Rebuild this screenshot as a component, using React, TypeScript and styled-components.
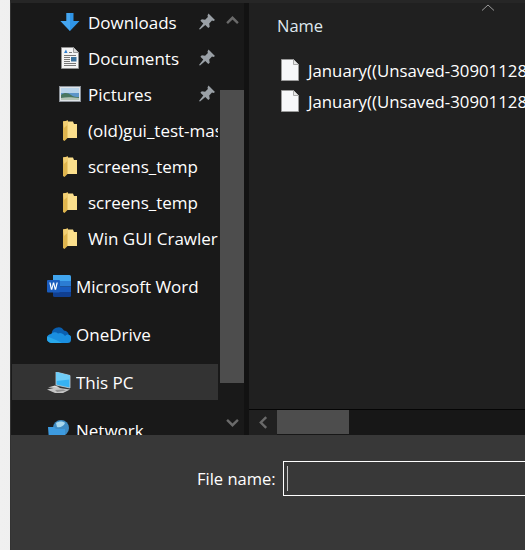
import styled, { createGlobalStyle } from "styled-components";

const GlobalStyle = createGlobalStyle`
  html, body { margin: 0; padding: 0; background: #e2e2e2; }
  * { box-sizing: border-box; }
`;

const FONT = `"Open Sans", "Noto Sans", sans-serif`;

function DownloadIcon() {
  return (
    <svg width="20" height="20" viewBox="0 0 20 20">
      <path d="M6.500 1h7v8H19.500L10 19 .5 9h6z" fill="#2f94e6" />
      <path d="M10 19 .5 9h6V1H10z" fill="#45a5ef" />
    </svg>
  );
}

function DocumentIcon() {
  return (
    <svg width="18" height="22" viewBox="0 0 18 22">
      <path d="M.5.5h12l5 5v16H.5z" fill="#f4f4f4" stroke="#8f8f8f" />
      <path d="M12.500.5v5h5" fill="#d8d8d8" stroke="#9a9a9a" />
      <path d="M3 6 5 2.500 6.500 6z" fill="#2f7fd0" />
      <path d="M8 5.500h3M3 8.500h12M3 10.500h6M3 12.500h6M3 14.500h6M3 16.500h12M3 18.500h12" stroke="#777" />
      <rect x="10" y="10" width="5.500" height="4.500" fill="#39719c" />
    </svg>
  );
}

function PictureIcon() {
  return (
    <svg width="22" height="16" viewBox="0 0 22 16">
      <rect x=".5" y=".5" width="21" height="15" fill="#dfe4e8" stroke="#8c9299" />
      <rect x="2" y="2" width="18" height="12" fill="#5c95c9" />
      <path d="M2 2h18v5H2z" fill="#b8d4ea" />
      <path d="M2 9c4-3 7-2 10 0s5 2 8 2v3H2z" fill="#48765f" />
      <path d="M2 12c5-1 10-1 18 0v2H2z" fill="#b2c3b5" />
    </svg>
  );
}

function FolderIcon() {
  return (
    <svg width="15" height="21" viewBox="0 0 15 21">
      <path d="M0 1.500 5 .5v17L1.500 21 0 20z" fill="#dfb54e" />
      <path d="M4.500 1.500h5.500l1 2.500H14v14H4.500z" fill="#fbdf8c" />
      <path d="M0 1.500 5 .5v4L1 8z" fill="#f2cf73" />
    </svg>
  );
}

function WordIcon() {
  return (
    <svg width="24" height="22" viewBox="0 0 24 22">
      <path d="M6 0h16.500A1.500 1.500 0 0 1 24 1.500V6H6z" fill="#41a5ee" />
      <rect x="6" y="6" width="18" height="5.500" fill="#2b7cd3" />
      <rect x="6" y="11.500" width="18" height="5.500" fill="#185abd" />
      <path d="M6 17h18v3.500a1.500 1.500 0 0 1-1.500 1.500H7.500A1.500 1.500 0 0 1 6 20.500z" fill="#103f91" />
      <rect x="0" y="5" width="13" height="12.500" rx="1" fill="#1a5cbe" />
      <path d="M2.300 7.500h1.300l1.100 5.300 1.200-5.300h1.300l1.200 5.300 1.100-5.300h1.300l-1.700 7.300H7.700L6.500 9.500l-1.200 5.300H3.900z" fill="#fff" />
    </svg>
  );
}

function CloudIcon() {
  return (
    <svg width="24" height="17" viewBox="0 0 24 17">
      <path d="M5 9a6.500 6.500 0 0 1 12-4.500A5.500 5.500 0 0 1 22 10L12 15z" fill="#0a5fb0" />
      <path d="M4.500 17A4.500 4.500 0 0 1 4 8a5 5 0 0 1 7-.500 5.500 5.500 0 0 1 7 2.500 3.500 3.500 0 0 1 6 3.500A3.500 3.500 0 0 1 20.500 17z" fill="#1a8fe0" />
      <path d="M4.500 17A4.500 4.500 0 0 1 .5 10.500L9 14l6 3z" fill="#28a8ea" />
    </svg>
  );
}

function ComputerIcon() {
  return (
    <svg width="24" height="21" viewBox="0 0 24 21">
      <path d="M9 0l14 3.500v12.500L9 13z" fill="#36b2f2" stroke="#c9d3da" strokeWidth=".8" />
      <path d="M9 0l14 3.500v4L9 9z" fill="#6fcdf8" />
      <path d="M1 15.500 8 13.500l5 2-3 .5z" fill="#dcdcdc" />
      <path d="M0 17.500 9 15.500l14 2-7 3.500H8z" fill="#c4c4c4" />
      <path d="M8 18l8-.5 3 1-9 1.500z" fill="#8f8f8f" />
    </svg>
  );
}

function GlobeIcon() {
  return (
    <svg width="22" height="20" viewBox="0 0 22 20">
      <circle cx="13" cy="8" r="8" fill="#3f8cc4" />
      <path d="M8 3c3-2 7-2 9 0-1 3-5 5-8 4z" fill="#a9d8ee" />
      <path d="M0 7h6l2 2h9v11H1z" fill="#3d9be0" />
    </svg>
  );
}

function PinIcon() {
  return (
    <svg width="16" height="17" viewBox="0 0 16 16">
      <path d="M9.500 0 16 6.500l-1.500 1-1.500-.4-2.800 2.800.5 3.300-1.400 1.400-3-3L1 16l-1-.6 4.300-5.300L1.400 7.200 2.800 5.800l3.300.5L8.900 3.500l-.4-1.500z" fill="#9aa0a6" />
    </svg>
  );
}

function Chevron({ dir, size = 13 }: { dir: "up" | "down" | "left"; size?: number }) {
  const d =
    dir === "up"
      ? "M1 8.500 6 3.500l5 5"
      : dir === "down"
        ? "M1 3.500l5 5 5-5"
        : "M8.500 1 3.500 6l5 5";
  return (
    <svg width={size} height={size} viewBox="0 0 12 12">
      <path d={d} fill="none" stroke="#6a6a6a" strokeWidth="2.200" />
    </svg>
  );
}

function FileIcon() {
  return (
    <svg width="18" height="22" viewBox="0 0 18 22" style={{ flex: "none" }}>
      <path d="M.5.500h12l5 5v16H.5z" fill="#f7f8fa" stroke="#9a9a9a" />
      <path d="M12.500.5v5h5" fill="#e6e6e6" stroke="#a8a8a8" />
    </svg>
  );
}

const Page = styled.div`
  width: 525px;
  height: 550px;
  display: flex;
  overflow: hidden;
  font-family: ${FONT};
  background: linear-gradient(to right, #f0f0f0, #d6d6d6);
`;

const Dialog = styled.div`
  margin-left: 10px;
  width: 515px;
  flex: none;
  display: flex;
  flex-direction: column;
  background: #2b2b2b;
  border-left: 1px solid #333;
  border-top: 3px solid #262626;
`;

const Browser = styled.div`
  height: 432px;
  flex: none;
  display: flex;
  background: #111;
`;

const NavPane = styled.nav`
  width: 233px;
  flex: none;
  display: flex;
  background: #191919;
  overflow: hidden;
`;

const NavList = styled.div`
  width: 209px;
  flex: none;
  padding: 1px 0 0 1px;
  overflow: hidden;
`;

const NavGroup = styled.div`
  margin-bottom: 12px;
`;

const NavRow = styled.div<{ $selected?: boolean; $indent?: boolean }>`
  position: relative;
  height: 36px;
  width: 206px;
  display: flex;
  align-items: center;
  background: ${(p) => (p.$selected ? "#333333" : "transparent")};
  padding-left: ${(p) => (p.$indent ? "47px" : "35px")};
`;

const NavIcon = styled.span<{ $wide?: boolean }>`
  width: 28px;
  flex: none;
  display: flex;
  justify-content: center;
  margin-left: ${(p) => (p.$wide ? "-2px" : "-3px")};
  margin-right: ${(p) => (p.$wide ? "3px" : "4px")};
`;

const NavLabel = styled.span`
  color: #fff;
  font-size: 17px;
  white-space: nowrap;
  overflow: hidden;
  flex: 1;
`;

const Pin = styled.span`
  position: absolute;
  left: 187px;
  top: 9px;
  display: flex;
`;

const VScroll = styled.div`
  width: 24px;
  flex: none;
  display: flex;
  flex-direction: column;
`;

const ScrollBtn = styled.div`
  height: 35px;
  flex: none;
  display: flex;
  align-items: center;
  justify-content: center;
`;

const VThumb = styled.div`
  height: 293px;
  flex: none;
  margin-top: 52px;
  background: #4d4d4d;
`;

const VBottom = styled.div`
  flex: 1;
  display: flex;
  align-items: flex-end;
  justify-content: center;
  padding-bottom: 6px;
`;

const Splitter = styled.div`
  width: 5px;
  flex: none;
  background: #121212;
`;

const Content = styled.main`
  flex: 1;
  min-width: 0;
  display: flex;
  flex-direction: column;
  background: #202020;
`;

const Header = styled.div`
  position: relative;
  height: 44px;
  flex: none;
  display: flex;
  align-items: center;
  padding-left: 28px;
  color: #dfe8ee;
  font-size: 16.500px;
`;

const SortMark = styled.span`
  position: absolute;
  left: 232px;
  top: 0;
  display: flex;
`;

const FileList = styled.div`
  flex: 1;
  padding-top: 12px;
  display: flex;
  flex-direction: column;
  gap: 9px;
  overflow: hidden;
`;

const FileRow = styled.div`
  height: 22px;
  display: flex;
  align-items: center;
  gap: 9px;
  padding-left: 32px;
  color: #fff;
  font-size: 16.800px;
  white-space: nowrap;
`;

const HScroll = styled.div`
  height: 26px;
  flex: none;
  display: flex;
  background: #171717;
  border-top: 1px solid #050505;
`;

const HBtn = styled.div`
  width: 28px;
  flex: none;
  display: flex;
  align-items: center;
  justify-content: center;
  background: #202020;
`;

const HThumb = styled.div`
  width: 72px;
  height: 24px;
  flex: none;
  background: #4d4d4d;
`;

const Footer = styled.footer`
  flex: 1;
  background: #383838;
  display: flex;
  align-items: flex-start;
  padding: 26px 0 0 186px;
  gap: 7px;
`;

const FieldLabel = styled.label`
  color: #fff;
  font-size: 16.500px;
  height: 35px;
  display: flex;
  align-items: center;
`;

const FieldBox = styled.div`
  flex: 1;
  height: 35px;
  border: 1px solid #fff;
  border-right: none;
  padding: 4px 0 4px 3px;
  display: flex;
`;

const Caret = styled.div`
  width: 1px;
  background: #c8c8c8;
`;

const quickAccess = [
  { label: "Downloads", icon: <DownloadIcon />, pinned: true },
  { label: "Documents", icon: <DocumentIcon />, pinned: true },
  { label: "Pictures", icon: <PictureIcon />, pinned: true },
  { label: "(old)gui_test-master", icon: <FolderIcon /> },
  { label: "screens_temp", icon: <FolderIcon /> },
  { label: "screens_temp", icon: <FolderIcon /> },
  { label: "Win GUI Crawler", icon: <FolderIcon /> },
];

const roots = [
  { label: "Microsoft Word", icon: <WordIcon /> },
  { label: "OneDrive", icon: <CloudIcon /> },
  { label: "This PC", icon: <ComputerIcon />, selected: true },
  { label: "Network", icon: <GlobeIcon /> },
];

const files = ["January((Unsaved-309011284", "January((Unsaved-309011285"];

export default function App() {
  return (
    <Page>
      <GlobalStyle />
      <Dialog>
        <Browser>
          <NavPane>
            <NavList>
              <NavGroup>
                {quickAccess.map((item, i) => (
                  <NavRow key={i} $indent>
                    <NavIcon>{item.icon}</NavIcon>
                    <NavLabel>{item.label}</NavLabel>
                    {item.pinned && (
                      <Pin>
                        <PinIcon />
                      </Pin>
                    )}
                  </NavRow>
                ))}
              </NavGroup>
              {roots.map((item) => (
                <NavGroup key={item.label}>
                  <NavRow $selected={item.selected}>
                    <NavIcon $wide>{item.icon}</NavIcon>
                    <NavLabel>{item.label}</NavLabel>
                  </NavRow>
                </NavGroup>
              ))}
            </NavList>
            <VScroll>
              <ScrollBtn>
                <Chevron dir="up" />
              </ScrollBtn>
              <VThumb />
              <VBottom>
                <Chevron dir="down" />
              </VBottom>
            </VScroll>
          </NavPane>
          <Splitter />
          <Content>
            <Header>
              Name
              <SortMark>
                <svg width="14" height="8" viewBox="0 0 14 8">
                  <path d="M1 7.500 7 2l6 5.500" fill="none" stroke="#9a9a9a" />
                </svg>
              </SortMark>
            </Header>
            <FileList>
              {files.map((name) => (
                <FileRow key={name}>
                  <FileIcon />
                  {name}
                </FileRow>
              ))}
            </FileList>
            <HScroll>
              <HBtn>
                <Chevron dir="left" />
              </HBtn>
              <HThumb />
            </HScroll>
          </Content>
        </Browser>
        <Footer>
          <FieldLabel>File name:</FieldLabel>
          <FieldBox>
            <Caret />
          </FieldBox>
        </Footer>
      </Dialog>
    </Page>
  );
}
